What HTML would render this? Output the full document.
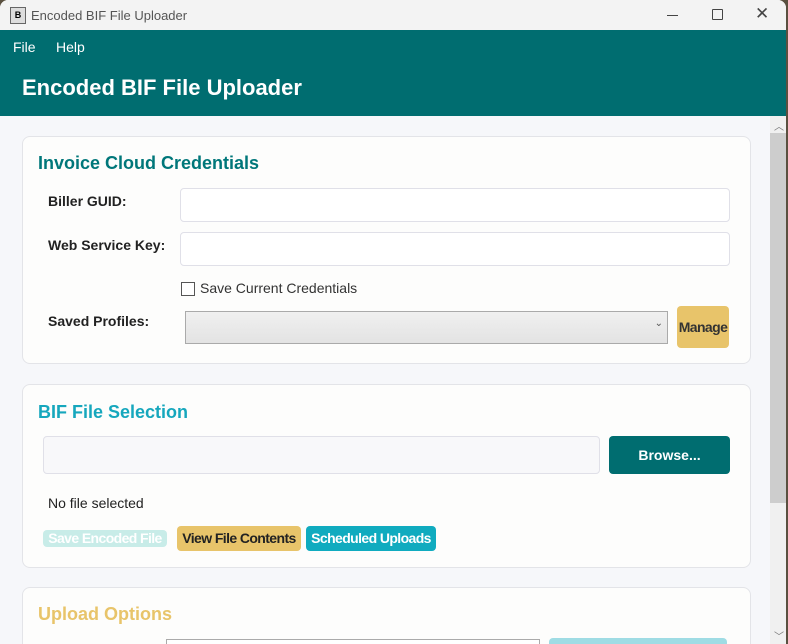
<!DOCTYPE html><html><head><style>
body{margin:0;width:788px;height:644px;overflow:hidden;background:#5a5040;font-family:"Liberation Sans",sans-serif;position:relative}
.win{position:absolute;left:0;top:0;width:786px;height:644px;background:#f6f7fa;border-radius:8px 8px 0 0;overflow:hidden}
.title{position:absolute;left:0;top:0;width:786px;height:30px;background:#f3f3f3}
.title .t{position:absolute;left:31px;top:8px;font-size:13px;color:#555}
.icon{position:absolute;left:10px;top:7px;width:14px;height:15px;border:1px solid #666;background:#ddd;font-size:9px;text-align:center;line-height:15px;font-weight:bold}
.hdr{position:absolute;left:0;top:30px;width:786px;height:86px;background:#006d70;color:#fff}
.menu{position:absolute;top:9px;font-size:14px}
.h1{position:absolute;left:22px;top:45px;font-size:22px;font-weight:bold}
.card{position:absolute;left:22px;width:727px;background:#fdfdfc;border:1px solid #e3e4e8;border-radius:8px}
.ct{position:absolute;left:15px;font-size:18px;font-weight:bold}
.lbl{position:absolute;font-size:14px;font-weight:bold;color:#222}
.inp{position:absolute;background:#fff;border:1px solid #e0e0e8;border-radius:4px}
.btn{position:absolute;font-weight:bold;font-size:14px;letter-spacing:-0.6px;border-radius:4px;text-align:center;white-space:nowrap}
</style></head><body><div class="win">
<div class="title"><div class="icon">B</div><div class="t">Encoded BIF File Uploader</div>
<div style="position:absolute;left:667px;top:15px;width:11px;border-top:1px solid #444"></div>
<div style="position:absolute;left:712px;top:9px;width:9px;height:9px;border:1px solid #444;border-radius:1px"></div>
<div style="position:absolute;left:755px;top:4px;font-size:17px;color:#444">✕</div></div>
<div class="hdr"><div class="menu" style="left:13px">File</div><div class="menu" style="left:56px">Help</div><div class="h1">Encoded BIF File Uploader</div></div>
<div style="position:absolute;left:770px;top:116px;width:16px;height:528px;background:#f0f0f0"><div style="position:absolute;left:0;top:17px;width:16px;height:370px;background:#cdcdcd"></div>
<div style="position:absolute;left:4px;top:2px;font-size:10px;color:#777">︿</div><div style="position:absolute;left:4px;top:512px;font-size:10px;color:#777">﹀</div></div>
<div class="card" style="top:136px;height:226px">
<div class="ct" style="top:16px;color:#00777a">Invoice Cloud Credentials</div>
<div class="lbl" style="left:25px;top:56px">Biller GUID:</div><div class="inp" style="left:157px;top:51px;width:548px;height:32px"></div>
<div class="lbl" style="left:25px;top:100px">Web Service Key:</div><div class="inp" style="left:157px;top:95px;width:548px;height:32px"></div>
<div style="position:absolute;left:158px;top:145px;width:12px;height:12px;border:1px solid #555;background:#fff"></div>
<div style="position:absolute;left:177px;top:143px;font-size:14px;color:#333">Save Current Credentials</div>
<div class="lbl" style="left:25px;top:176px">Saved Profiles:</div>
<div style="position:absolute;left:162px;top:174px;width:481px;height:31px;background:linear-gradient(#f0f0f0,#e3e3e3);border:1px solid #aaa"><span style="position:absolute;right:4px;top:6px;font-size:10px;color:#555">⌄</span></div>
<div class="btn" style="left:654px;top:169px;width:52px;height:42px;line-height:42px;background:#e8c46a;color:#333">Manage</div>
</div>
<div class="card" style="top:384px;height:182px">
<div class="ct" style="top:17px;color:#16a7bd">BIF File Selection</div>
<div class="inp" style="left:20px;top:51px;width:555px;height:36px;background:#f8f8fa"></div>
<div class="btn" style="left:586px;top:51px;width:121px;height:38px;line-height:38px;background:#006d70;color:#fff;letter-spacing:0">Browse...</div>
<div style="position:absolute;left:25px;top:110px;font-size:14px;color:#222">No file selected</div>
<div class="btn" style="left:20px;top:145px;width:124px;height:17px;line-height:17px;background:#c8ece8;color:#fff">Save Encoded File</div>
<div class="btn" style="left:154px;top:141px;width:124px;height:25px;line-height:25px;background:#e8c46a;color:#222">View File Contents</div>
<div class="btn" style="left:283px;top:141px;width:130px;height:25px;line-height:25px;background:#10abbf;color:#fff">Scheduled Uploads</div>
</div>
<div class="card" style="top:587px;height:80px">
<div class="ct" style="top:16px;color:#e8c46a">Upload Options</div>
<div style="position:absolute;left:143px;top:51px;width:372px;height:10px;border:1px solid #aaa;background:#fff"></div>
<div style="position:absolute;left:526px;top:50px;width:178px;height:10px;background:#9fdce4;border-radius:4px"></div>
</div>
</div></body></html>
